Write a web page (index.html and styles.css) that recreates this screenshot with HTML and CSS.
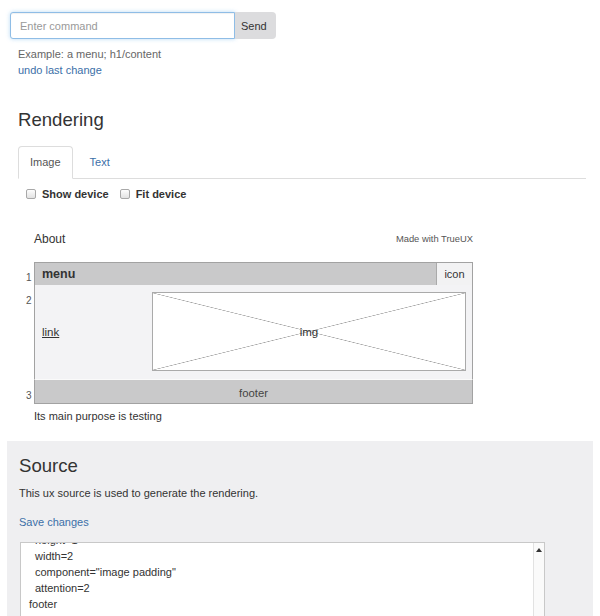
FILE: index.html
```html
<!DOCTYPE html>
<html lang="en">
<head>
    <meta charset="UTF-8">
    <meta name="viewport" content="width=device-width, initial-scale=1.0">
    <title>TrueUX</title>
    <link rel="stylesheet" href="styles.css">
</head>
<body>
    <div class="command">
        <input class="command-input" type="text" placeholder="Enter command">
        <button class="command-send">Send</button>
    </div>
    <div class="hint">
        <p>Example: a menu; h1/content</p>
        <a href="#">undo last change</a>
    </div>

    <h2 class="title">Rendering</h2>
    <ul class="tabs">
        <li class="tab active"><a href="#">Image</a></li>
        <li class="tab"><a href="#">Text</a></li>
    </ul>
    <div class="options">
        <label><span class="check"></span>Show device</label>
        <label><span class="check"></span>Fit device</label>
    </div>

    <div class="preview">
        <div class="preview-head">
            <span class="about">About</span>
            <span class="made">Made with TrueUX</span>
        </div>
        <div class="row">
            <span class="num">1</span>
            <div class="cell menu"><b>menu</b><span class="icon">icon</span></div>
        </div>
        <div class="row">
            <span class="num">2</span>
            <div class="cell content">
                <span class="link">link</span>
                <div class="img">img</div>
            </div>
        </div>
        <div class="row">
            <span class="num">3</span>
            <div class="cell footer">footer</div>
        </div>
        <p class="caption">Its main purpose is testing</p>
    </div>

    <div class="source">
        <h2 class="title">Source</h2>
        <p class="source-text">This ux source is used to generate the rendering.</p>
        <a class="save" href="#">Save changes</a>
        <div class="textarea">
            <div class="lines">
                <div class="line first indent">height=1</div>
                <div class="line indent">width=2</div>
                <div class="line indent">component="image padding"</div>
                <div class="line indent">attention=2</div>
                <div class="line">footer</div>
                <div class="line indent">height=1</div>
                <div class="line indent">width=1</div>
            </div>
            <div class="scrollbar"></div>
        </div>
    </div>
</body>
</html>
```

FILE: styles.css
```css
* {
    box-sizing: border-box;
}
html, body {
    height: 616px;
    overflow: hidden;
}
body {
    margin: 0;
    font-family: "Liberation Sans", Arial, sans-serif;
    font-size: 11px;
    line-height: 16px;
    color: #333;
    background: #fff;
}
p {
    margin: 0;
}
a {
    color: #3c6fa8;
    text-decoration: none;
}

/* command line */
.command {
    display: flex;
    padding: 12px 0 0 10px;
}
.command-input {
    width: 225px;
    height: 27px;
    padding: 0 9px;
    border: 1px solid #8fbde6;
    border-radius: 3px 0 0 3px;
    box-shadow: inset 0 1px 1px rgba(0, 0, 0, .06), 0 0 4px rgba(102, 175, 233, .45);
    font: 11px "Liberation Sans", Arial, sans-serif;
    color: #333;
    outline: none;
}
.command-input::placeholder {
    color: #999;
}
.command-send {
    width: 41px;
    height: 27px;
    padding: 0 0 0 6px;
    border: 0;
    border-radius: 0 4px 4px 0;
    background: #dcdcde;
    font: 11px "Liberation Sans", Arial, sans-serif;
    color: #333;
    text-align: left;
}
.hint {
    margin: 7px 0 0 18px;
    color: #666;
}

.title {
    margin: 31px 0 0 18px;
    font-size: 18.6px;
    line-height: 22px;
    font-weight: normal;
    color: #333;
}

/* tabs */
.tabs {
    display: flex;
    list-style: none;
    margin: 15px 14px 0 18px;
    padding: 0;
    border-bottom: 1px solid #ddd;
}
.tab {
    margin: 0 4px -1px 0;
}
.tab a {
    display: block;
    padding: 7px 11px 8px;
    border: 1px solid transparent;
    border-radius: 4px 4px 0 0;
    line-height: 16px;
}
.tab.active a {
    color: #555;
    background: #fff;
    border-color: #ddd #ddd transparent;
}
.tab + .tab a {
    padding-left: 12px;
}
.options {
    display: flex;
    gap: 11px;
    margin: 7px 0 0 26px;
    font-weight: bold;
}
.options label {
    display: flex;
    align-items: center;
    gap: 6px;
}
.check {
    width: 10px;
    height: 10px;
    border: 1px solid #a8a8a8;
    border-radius: 2px;
    background: linear-gradient(#fdfdfd, #e2e2e2);
}

/* rendering */
.preview {
    width: 447px;
    margin: 28.5px 0 0 26px;
}
.preview-head {
    display: flex;
    justify-content: space-between;
    align-items: center;
    margin: 0 0 15px 8px;
}
.about {
    font-size: 12px;
}
.made {
    font-size: 9.4px;
    line-height: 12px;
    color: #555;
}
.row {
    display: flex;
    align-items: flex-start;
}
.num {
    box-sizing: content-box;
    width: 8px;
    height: 0;
    padding-top: 8px;
    font-size: 10px;
    color: #555;
}
.cell {
    width: 439px;
    border-left: 1px solid #a2a2a2;
    border-right: 1px solid #a2a2a2;
}
.menu {
    display: flex;
    height: 23px;
    border-top: 1px solid #a2a2a2;
    background: #c9c9ca;
}
.menu b {
    padding-left: 7px;
    font-size: 12.5px;
    line-height: 22px;
}
.icon {
    width: 36px;
    margin-left: auto;
    border-left: 1px solid #aaa;
    background: #f2f2f3;
    text-align: center;
    line-height: 22px;
}
.content {
    display: flex;
    align-items: center;
    height: 95px;
    padding: 8px 6px 8px 7px;
    background: #f3f3f5;
    border-bottom: 1px solid #fafafa;
}
.link {
    flex: 1;
    font-size: 11.5px;
    text-decoration: underline;
}
.img {
    display: flex;
    align-items: center;
    justify-content: center;
    width: 314px;
    height: 79px;
    border: 1px solid #aaa;
    background-color: #fff;
    background-image:
        linear-gradient(to top right, transparent calc(50% - 0.6px), #a5a5a5 50%, transparent calc(50% + 0.6px)),
        linear-gradient(to bottom right, transparent calc(50% - 0.6px), #a5a5a5 50%, transparent calc(50% + 0.6px));
    font-size: 11.5px;
}
.footer {
    height: 24px;
    padding-top: 3px;
    border-bottom: 1px solid #a2a2a2;
    background: #c9c9ca;
    text-align: center;
    line-height: 20px;
    font-size: 11.3px;
    color: #444;
}
.caption {
    margin: 4px 0 0 8px;
}

/* source */
.source {
    height: 200px;
    margin: 17px 7px 0 6.5px;
    padding: 14px 0 0 12.5px;
    background: #efeff1;
}
.source .title {
    margin: 0;
}
.source-text {
    margin-top: 8px;
}
.save {
    display: block;
    margin-top: 13px;
}
.textarea {
    display: flex;
    width: 525px;
    height: 100px;
    margin: 12px 0 0 1px;
    border: 1px solid #c8c8c8;
    background: #fff;
}
.lines {
    flex: 1;
    padding-left: 8px;
    overflow: hidden;
}
.line {
    white-space: pre;
}
.line.indent {
    padding-left: 6px;
}
.line.first {
    margin-top: -11px;
}
.scrollbar {
    display: flex;
    justify-content: center;
    width: 11px;
    padding-top: 5px;
    border-left: 1px solid #e2e2e2;
    background: #fafafa;
}
.scrollbar::before {
    content: "";
    width: 0;
    height: 0;
    border-left: 3px solid transparent;
    border-right: 3px solid transparent;
    border-bottom: 4px solid #333;
}
```
